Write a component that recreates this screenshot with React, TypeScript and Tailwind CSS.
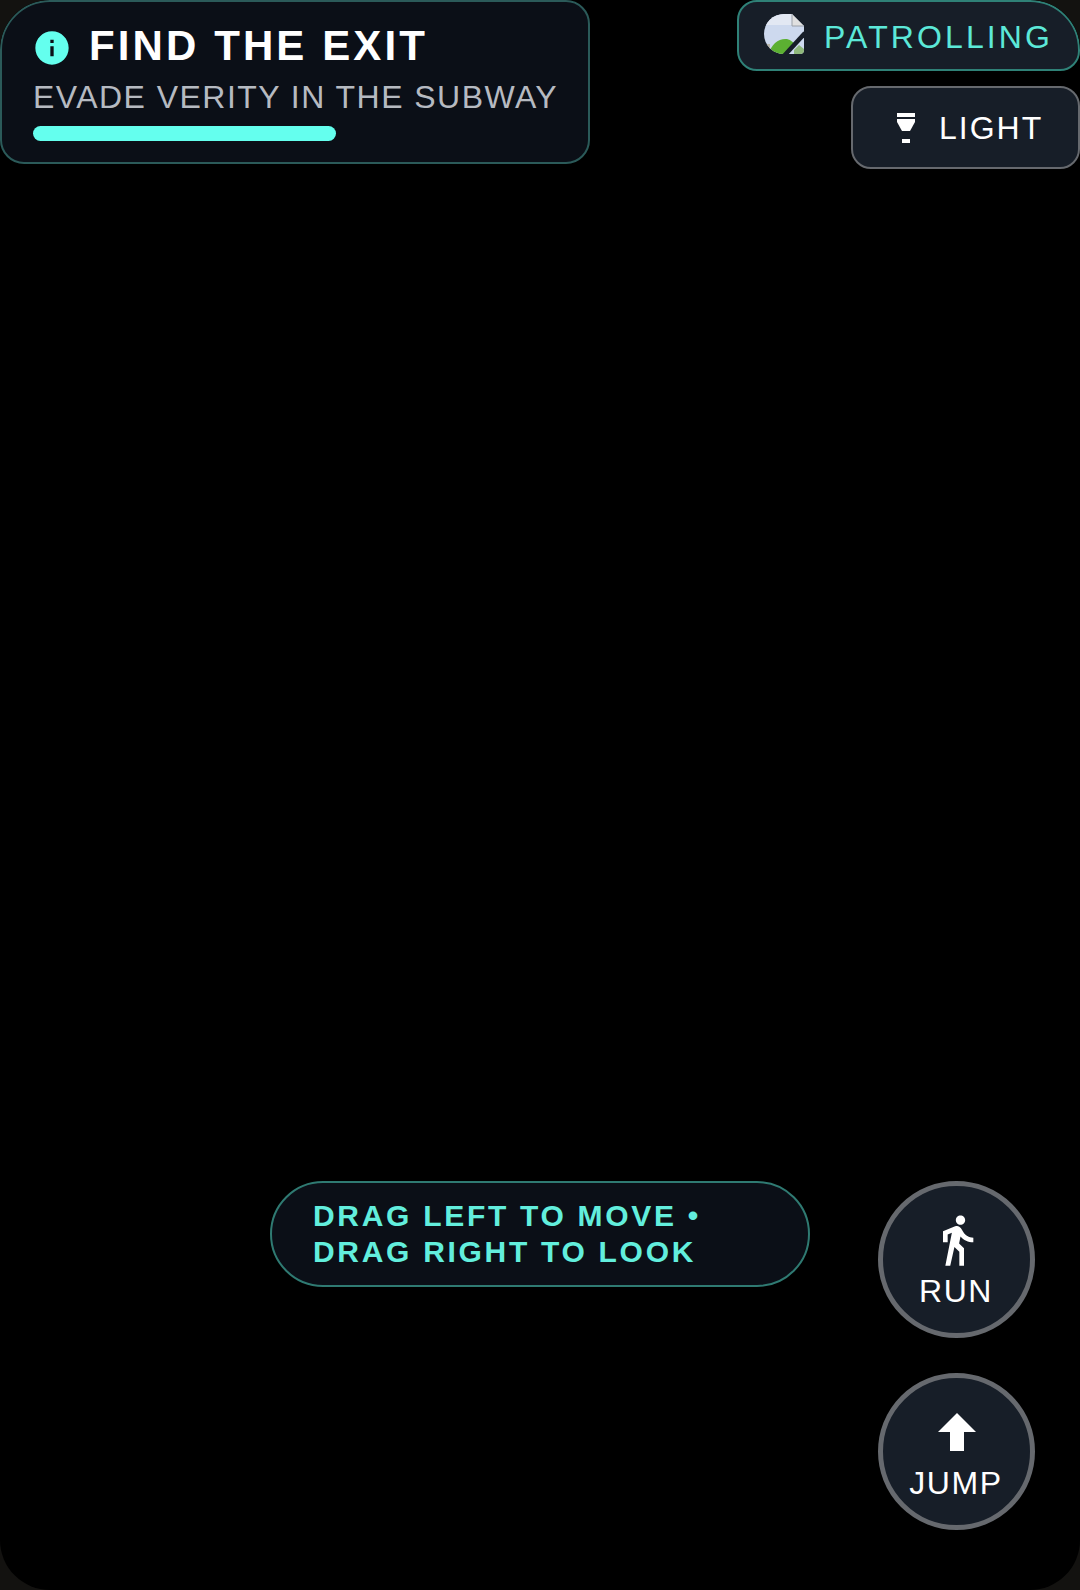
import { MdDirectionsWalk, MdInfo } from "react-icons/md";

function BrokenImage() {
  return (
    <svg width="40" height="40" viewBox="0 0 40 40" className="-mt-[4px] shrink-0">
      <defs>
        <clipPath id="thumb">
          <path d="M20 0 H28 L40 12 V36 Q40 40 36 40 H20 A20 20 0 0 1 20 0 Z" />
        </clipPath>
      </defs>
      <g clipPath="url(#thumb)">
        <rect width="40" height="40" fill="#cdd9ee" />
        <rect x="0" y="0" width="40" height="11" fill="#e2e8f3" />
        <rect x="0" y="30" width="6" height="10" fill="#b9b6a8" />
        <path d="M5 40 C7 30 15 24 23 25 C27 26 30 29 32 31 L23 40 Z" fill="#5cb032" />
        <path d="M30 36 L35 31 L40 35 V40 H30 Z" fill="#8fb87c" />
      </g>
      <path d="M28 0 V12 H40 Z" fill="#e0e0e0" stroke="#9aa0a8" strokeWidth="1" />
      <path d="M41 19 L20 42" stroke="#171e28" strokeWidth="4.5" />
    </svg>
  );
}

function LightIcon() {
  return (
    <svg width="18" height="30" viewBox="0 0 18 30" fill="white" className="shrink-0">
      <rect x="0" y="0" width="18" height="4" />
      <path d="M0 6 H18 V9 L13 18 H5 L0 9 Z" />
      <rect x="5" y="26" width="8" height="4" />
    </svg>
  );
}

function ArrowIcon() {
  return (
    <div className="flex h-[56px] w-[56px] items-center justify-center">
      <svg width="38" height="38" viewBox="0 0 38 38" fill="white">
        <path d="M19 0 L38 19 H26 V38 H12 V19 H0 Z" />
      </svg>
    </div>
  );
}

function RoundButton({ label, children }: { label: string; children: React.ReactNode }) {
  return (
    <button className="flex h-[157px] w-[157px] flex-col items-center justify-center rounded-full border-[5px] border-[#66696e] bg-[#171e28] pt-[1px] text-white">
      {children}
      <span className="mt-[5px] pr-[1px] text-[32px] leading-[36px] tracking-[1.6px]">{label}</span>
    </button>
  );
}

export default function App() {
  return (
    <div className="h-[1590px] w-[1080px] overflow-hidden bg-[#131210] font-['Liberation_Sans',sans-serif]">
      <div className="relative h-full w-full overflow-hidden rounded-[50px] bg-black">
        {/* top hud */}
        <div className="absolute inset-x-0 top-0 flex items-start justify-between">
          <div className="h-[164px] w-[590px] rounded-[24px] rounded-tl-[50px] border-2 border-[#2b5a59] bg-[#0b0f17] pl-[31px] pt-[19px]">
            <div className="flex items-center gap-[17px]">
              <MdInfo size={40} className="mt-[3px] -ml-[1px] text-[#64ffee]" />
              <span className="text-[42px] font-bold leading-[50px] tracking-[3.1px] text-white">FIND THE EXIT</span>
            </div>
            <div className="mt-[6px] text-[32px] leading-[40px] tracking-[1.46px] text-[#b6bac1]">EVADE VERITY IN THE SUBWAY</div>
            <div className="mt-[9px] h-[15px] w-[303px] rounded-full bg-[#64ffee]" />
          </div>

          <div className="flex flex-col items-end gap-[15px]">
            <div className="flex h-[71px] w-[343px] items-center rounded-[20px] rounded-tr-[50px] border-2 border-[#2f8177] bg-[#171e28] pl-[25px]">
              <BrokenImage />
              <span className="ml-[20px] mt-[2px] text-[32px] tracking-[3.1px] text-[#5ce8d8]">PATROLLING</span>
            </div>
            <div className="flex h-[83px] w-[229px] items-center rounded-[20px] border-2 border-[#66696e] bg-[#171e28] pl-[44px]">
              <LightIcon />
              <span className="ml-[24px] text-[32px] tracking-[2px] text-white">LIGHT</span>
            </div>
          </div>
        </div>

        {/* bottom controls */}
        <div className="absolute bottom-[60px] right-[45px] flex items-start gap-[68px]">
          <div className="flex h-[106px] w-[540px] flex-col justify-center rounded-full border-2 border-[#2f7a72] bg-[#0b0f17] pl-[41px] text-[30px] font-bold leading-[36px] tracking-[2.7px] text-[#62eedd]">
            <div>DRAG LEFT TO MOVE •</div>
            <div>DRAG RIGHT TO LOOK</div>
          </div>
          <div className="flex flex-col gap-[35px]">
            <RoundButton label="RUN">
              <MdDirectionsWalk size={56} />
            </RoundButton>
            <RoundButton label="JUMP">
              <ArrowIcon />
            </RoundButton>
          </div>
        </div>
      </div>
    </div>
  );
}
